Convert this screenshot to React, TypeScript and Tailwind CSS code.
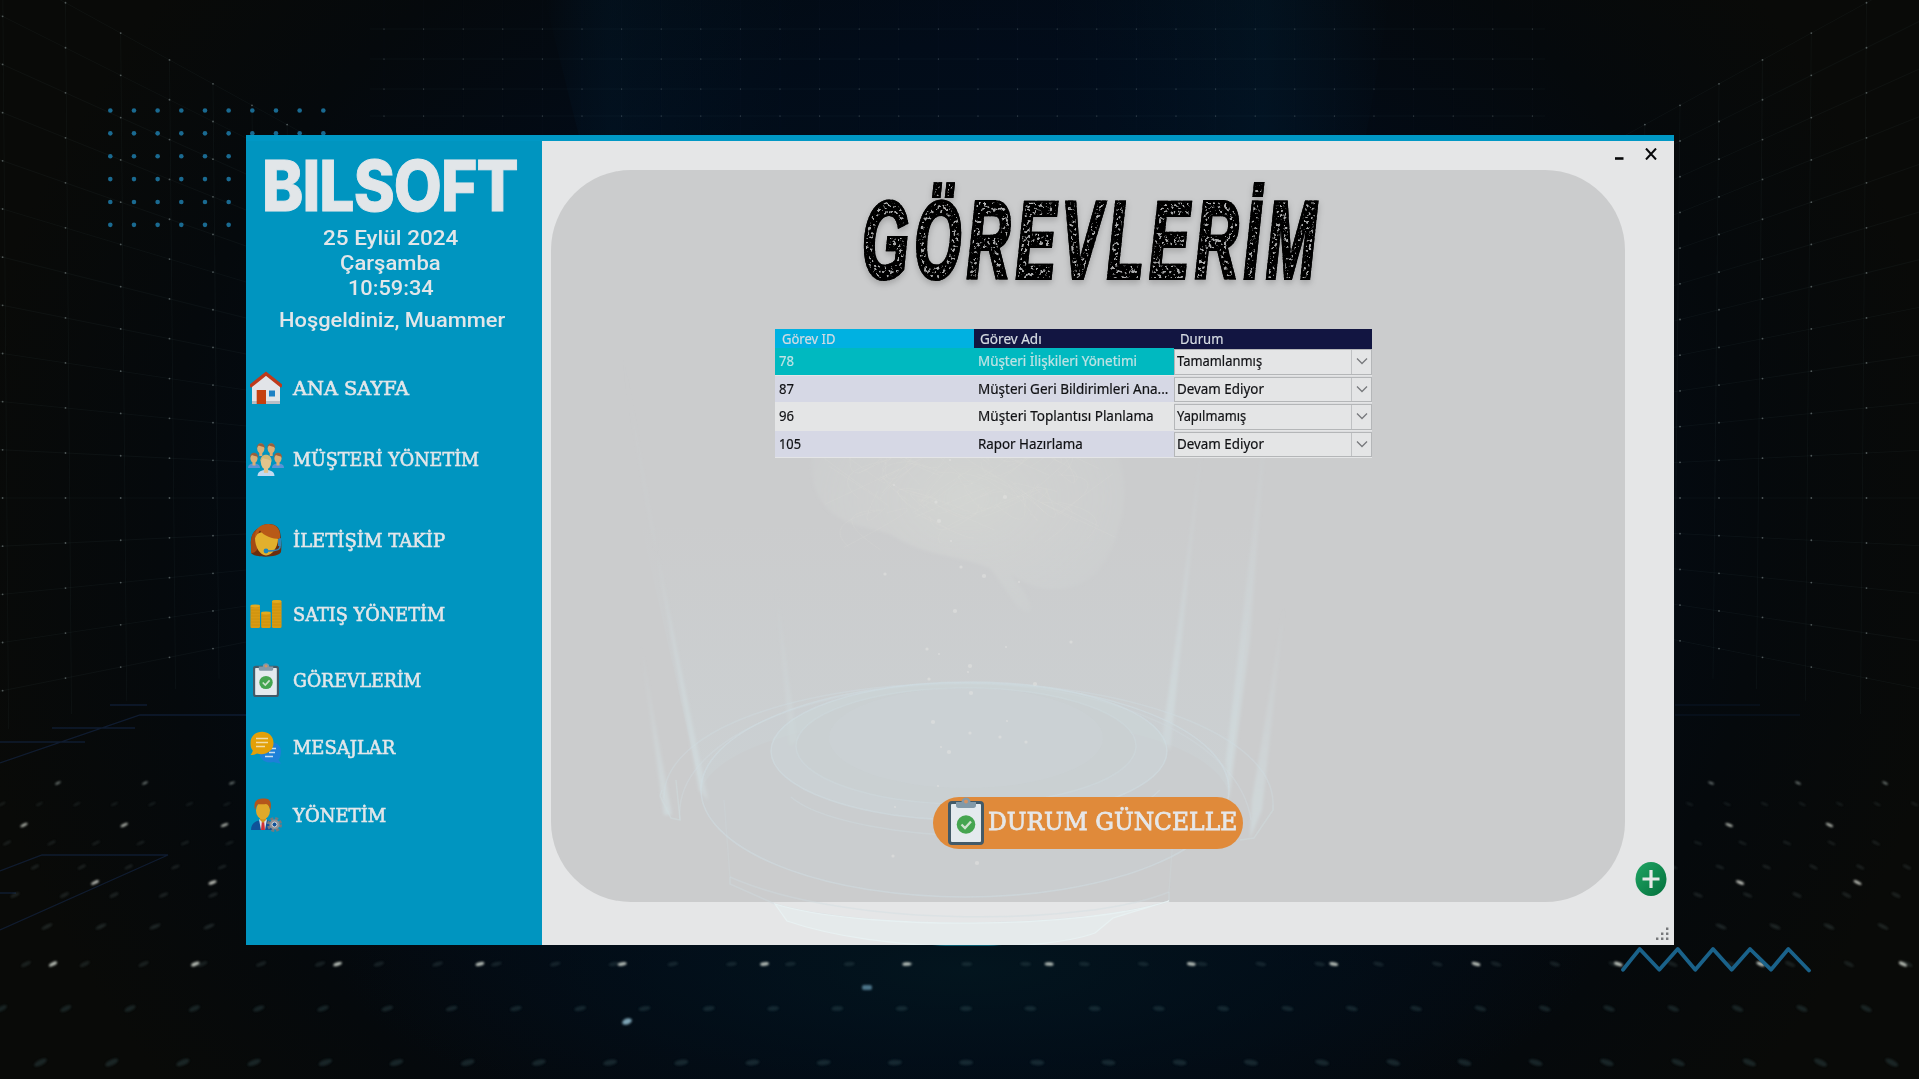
import { useLayoutEffect, useRef, useState } from "react";
import type { ReactNode } from "react";

/* Text line squeezed or stretched to a fixed width. */
function Fit({ w, className = "", children }: { w: number; className?: string; children: ReactNode }) {
  const ref = useRef<HTMLSpanElement>(null);
  const [k, setK] = useState(1);
  useLayoutEffect(() => {
    if (ref.current && ref.current.offsetWidth) setK(w / ref.current.offsetWidth);
  }, [w]);
  return (
    <span className="block shrink-0 whitespace-nowrap" style={{ width: w }}>
      <span ref={ref} className={`inline-block origin-left align-top ${className}`} style={{ transform: `scaleX(${k})` }}>
        {children}
      </span>
    </span>
  );
}

const CX = 966;

function DotRow({ y, step, from, rx, ry, fill, o }: { y: number; step: number; from: number; rx: number; ry: number; fill: string; o: number }) {
  const xs: number[] = [];
  for (let x = from; x < 1919; x += step) xs.push(x);
  return (
    <g fill={fill} opacity={o}>
      {xs.map((x) => (
        <ellipse key={x} cx={x} cy={y} rx={rx} ry={ry} transform={`rotate(${((x - CX) / 960) * 28} ${x} ${y})`} />
      ))}
    </g>
  );
}

function Backdrop() {
  const ds: number[] = [];
  for (let k = 0; k < 12; k++) ds.push(1 / (0.001038 + 0.0000725 * k));
  const slopes: number[] = [];
  for (let j = -11; j <= 4; j++) slopes.push(j * 0.05);
  const cols: number[] = [];
  for (let x = 384; x < 1550; x += 39.6) cols.push(x);
  return (
    <svg className="absolute inset-0" width="1919" height="1079" viewBox="0 0 1919 1079">
      <defs>
        <radialGradient id="glow" gradientUnits="userSpaceOnUse" cx="960" cy="540" r="1000" gradientTransform="translate(960 540) scale(1 .9) translate(-960 -540)">
          <stop offset="0" stopColor="#021220" />
          <stop offset=".55" stopColor="#020b17" />
          <stop offset=".8" stopColor="#05090c" />
          <stop offset="1" stopColor="#090a08" />
        </radialGradient>
        <linearGradient id="shaft" x1="0" x2="1" y1="0" y2="0">
          <stop offset="0" stopColor="#02233c" stopOpacity="0" />
          <stop offset=".08" stopColor="#021c30" stopOpacity=".35" />
          <stop offset=".3" stopColor="#00101f" stopOpacity=".2" />
          <stop offset=".6" stopColor="#001024" stopOpacity=".2" />
          <stop offset=".85" stopColor="#022238" stopOpacity=".35" />
          <stop offset="1" stopColor="#02233c" stopOpacity="0" />
        </linearGradient>
        <radialGradient id="floor">
          <stop offset="0" stopColor="#03161f" stopOpacity=".9" />
          <stop offset="1" stopColor="#03101a" stopOpacity="0" />
        </radialGradient>
        <filter id="dim">
          <feGaussianBlur stdDeviation=".9" />
        </filter>
      </defs>
      <rect width="1919" height="1079" fill="url(#glow)" />
      <path d="M545 0H1390L1365 140H580Z" fill="url(#shaft)" />
      <ellipse cx="966" cy="970" rx="620" ry="170" fill="url(#floor)" />
      <g stroke="#8fa7b5" strokeOpacity=".05" fill="none">
        {[29, 59, 89, 116].map((y) => (
          <path key={y} d={`M370 ${y}H1545`} />
        ))}
        {cols.map((x) => (
          <path key={x} d={`M${x} 0V135`} strokeOpacity=".02" />
        ))}
        {[-1, 1].map((s) =>
          ds.map((d) => <path key={`${s}${d}`} d={`M${CX + s * d} ${498 - d * 0.55}L${CX + s * (d - 6)} ${498 + d * 0.24}`} />),
        )}
        {[-1, 1].map((s) => slopes.map((m) => <path key={`${s}${m}`} d={`M${CX + s * 966} ${498 + 966 * m}L${CX + s * 560} ${498 + 560 * m}`} />))}
      </g>
      <g fill="#b9c8c8" opacity=".4">
        {[-1, 1].map((s) =>
          ds.map((d) => slopes.map((m) => <circle key={`${s}${d}${m}`} cx={CX + s * d} cy={498 + d * m} r=".9" />)),
        )}
        {[29, 59, 89, 116].map((y) => cols.map((x) => <circle key={`${x}${y}`} cx={x} cy={y} r=".6" />))}
      </g>
      <g stroke="#15284a" strokeOpacity=".6" fill="none" strokeWidth="1.3">
        <path d="M0 871L42 855H168L0 930M0 893H16M0 742H85M52 728H135M0 763L140 715H246M110 705H147" />
        <path d="M1675 715H1800M1675 705H1760" strokeOpacity=".3" />
      </g>
      <g filter="url(#dim)">
        <DotRow y={783} step={87} from={58} rx={3.2} ry={1} fill="#c5d3cf" o={0.55} />
        <DotRow y={804} step={37.5} from={2} rx={4} ry={1} fill="#7f9595" o={0.16} />
        <DotRow y={825} step={100.3} from={24} rx={4} ry={1.3} fill="#dfe4da" o={0.75} />
        <DotRow y={843} step={44.5} from={7} rx={4.5} ry={1.2} fill="#7f9595" o={0.18} />
        <DotRow y={867} step={46.8} from={35} rx={4.5} ry={1.4} fill="#7f9595" o={0.18} />
        <DotRow y={882.5} step={117.5} from={95} rx={4.3} ry={1.5} fill="#e6e9e0" o={0.8} />
        <DotRow y={895} step={49.5} from={15} rx={5} ry={1.6} fill="#7f9595" o={0.18} />
        <DotRow y={926.5} step={54} from={47} rx={6} ry={1.8} fill="#7f9595" o={0.2} />
        <DotRow y={964} step={58.8} from={26} rx={5.500} ry={2} fill="#7f9a9a" o={0.16} />
        <DotRow y={964} step={142.3} from={53} rx={4.500} ry={1.8} fill="#dfe6dd" o={0.8} />
        <DotRow y={1008.5} step={64.3} from={1.5} rx={6} ry={2.4} fill="#50787c" o={0.24} />
        <DotRow y={1062.5} step={71.2} from={40.5} rx={7} ry={2.8} fill="#50787c" o={0.26} />
        <ellipse cx="627" cy="1021.5" rx="5" ry="3" fill="#7fa6b8" transform="rotate(-20 627 1021.5)" />
        <rect x="862" y="985" width="10" height="5" rx="2" fill="#5f8da5" opacity=".8" />
      </g>
      <ellipse cx="967" cy="944.500" rx="38" ry="1.600" fill="#0e7f97" opacity=".7" />
      <g fill="#1a6a91">
        {Array.from({ length: 60 }, (_, i) => (
          <circle key={i} cx={110.3 + (i % 10) * 23.67} cy={110.5 + Math.floor(i / 10) * 22.87} r="2.3" />
        ))}
      </g>
      <path
        d="M1623 969.700L1639.700 949L1659.300 969.700L1677.700 949L1695.300 969.700L1713 949L1731.700 969.700L1750 949L1771 969.700L1788.300 949L1809 970.500"
        fill="none"
        stroke="#1a628a"
        strokeWidth="3.800"
        strokeLinecap="round"
        strokeLinejoin="round"
      />
    </svg>
  );
}

/* Translucent projector and brain artwork showing through the window. */
function Hologram() {
  const sparks = [
    [894, 485], [936, 502], [939, 521], [951, 541], [885, 574], [984, 576], [1019, 582], [961, 567], [955, 611], [939, 654], [927, 649], [970, 666],
    [968, 672], [929, 679], [971, 693], [1006, 647], [1071, 642], [933, 722], [1007, 721], [1026, 742], [949, 752], [941, 747], [970, 733], [1035, 684],
    [895, 807], [893, 856], [977, 863], [905, 356], [883, 430], [935, 435], [950, 460], [831, 432], [1005, 497], [938, 786], [1000, 737],
  ];
  const strands = Array.from({ length: 90 }, (_, i) => {
    const a = i * 0.7;
    const x = 968 + Math.cos(a) * 90;
    const y = 475 + Math.sin(a * 1.3) * 38;
    return `M${x} ${y}q${Math.cos(i) * 60} ${Math.sin(i * 2) * 35} ${Math.sin(i * 3) * 60} ${Math.cos(i * 2) * 40}`;
  }).join("");
  return (
    <svg className="pointer-events-none absolute -left-[296px] -top-[6px]" width="1428" height="810" viewBox="246 135 1428 810">
      <defs>
        <linearGradient id="beam" x1="0" x2="0" y1="0" y2="1">
          <stop offset="0" stopColor="#d2dee1" stopOpacity="0" />
          <stop offset="1" stopColor="#d3e0e3" stopOpacity=".6" />
        </linearGradient>
        <linearGradient id="haze" x1="0" x2="0" y1="0" y2="1">
          <stop offset="0" stopColor="#cdd8dc" stopOpacity="0" />
          <stop offset="1" stopColor="#cdd8dc" stopOpacity=".35" />
        </linearGradient>
        <radialGradient id="brain">
          <stop offset="0" stopColor="#d4d6d3" stopOpacity=".85" />
          <stop offset="1" stopColor="#cfd1d1" stopOpacity=".5" />
        </radialGradient>
        <filter id="soft">
          <feGaussianBlur stdDeviation="1.8" />
        </filter>
      </defs>
      <path
        d="M812 470C808 430 840 398 890 390C960 376 1050 395 1095 425C1130 450 1128 500 1118 530C1108 570 1085 590 1052 589C1038 589 1024 583 1010 574C1024 590 1032 602 1030 612C1018 614 1008 590 990 568C960 556 930 556 900 540C885 528 860 530 840 518C822 508 813 490 812 470Z"
        fill="url(#brain)"
        filter="url(#soft)"
      />
      <path d={strands} stroke="#dcddd9" strokeOpacity=".25" fill="none" strokeWidth=".8" />
      <path d="M640 520L1260 520L1228 790C1190 690 740 690 701 790Z" fill="url(#haze)" />
      <g fill="url(#beam)" filter="url(#soft)">
        <path d="M618 330L650 520L708 800L699 790L672 640Z" />
        <path d="M1268 400L1250 640L1229 800L1226 760L1240 640Z" />
        <path d="M1205 420L1170 750L1162 740L1180 610Z" />
        <path d="M640 640L672 815L664 815Z" />
        <path d="M1285 600L1262 810L1250 838L1252 800Z" />
        <path d="M775 580L797 740L790 745Z" opacity=".6" />
      </g>
      <g fill="none" stroke="#d0dde1" strokeOpacity=".55" strokeWidth="1.500">
        <path d="M664 800C660 730 800 683 967 683C1130 683 1275 735 1273 805" strokeOpacity=".4" />
        <path d="M680 820C672 740 810 684 967 684C1110 684 1240 740 1251 820" strokeOpacity=".35" />
        <ellipse cx="965" cy="790" rx="264" ry="107" fill="#cad1d3" fillOpacity=".3" />
        <ellipse cx="969" cy="751" rx="198" ry="69" fill="#ccd7da" fillOpacity=".45" />
        <ellipse cx="966" cy="746" rx="170" ry="58" fill="#c9cfd1" fillOpacity=".8" strokeOpacity=".4" />
        <ellipse cx="966" cy="738" rx="137" ry="50" fill="#cbd2d5" fillOpacity=".6" stroke="none" />
        <path d="M791 797C840 840 1090 860 1160 790" strokeOpacity=".4" />
        <path d="M662 790L660 796L671 818L680 820L676 780M1273 805V810L1254 838L1240 840" strokeOpacity=".45" />
        <path d="M730 877V884L775 904C860 930 1080 930 1169 901V892" strokeOpacity=".4" />
        <path d="M730 877C850 930 1090 925 1169 892" strokeOpacity=".4" />
        <path d="M724 800L730 877M1175 810L1169 892" strokeOpacity=".25" />
      </g>
      <path d="M775 904L787 921C880 953 1040 953 1095 933L1113 918L1169 901C1080 930 860 930 775 904Z" fill="#e5eaeb" stroke="#e8f1f2" strokeWidth="1.300" />
      <g fill="#e2e2e0" opacity=".6">
        {sparks.map(([x, y], i) => (
          <circle key={i} cx={x} cy={y} r={1.1 + (i % 3) * 0.5} />
        ))}
      </g>
    </svg>
  );
}

function HomeIcon() {
  return (
    <svg viewBox="0 0 32 34" className="h-[34px] w-8">
      <path d="M2 14L16 3L30 14V33H2Z" fill="#e2e4e8" />
      <path d="M2 30H30V33H2Z" fill="#b9bec6" />
      <path d="M0 15.500L16 2.600L32 15.500" fill="none" stroke="#bf3a1b" strokeWidth="3.400" strokeLinejoin="miter" />
      <rect x="6.700" y="19" width="9.300" height="14" fill="#c5400f" />
      <rect x="19" y="19.500" width="6" height="6" fill="#1c80c4" />
    </svg>
  );
}

function Person({ x, y, s, face, hair, body }: { x: number; y: number; s: number; face: string; hair: string; body: string }) {
  return (
    <g transform={`translate(${x} ${y}) scale(${s})`}>
      <path d="M-6 14C-6 10.500 -3 9.500 0 9.500C3 9.500 6 10.500 6 14Z" fill={body} />
      <rect x="-1.500" y="6" width="3" height="5.500" fill={face} />
      <ellipse cx="0" cy="4" rx="3.600" ry="5" fill={face} />
      <path d="M-4 4C-4.500 -3 4.500 -3 4 4C3 1.500 -1 2 -2 1C-3 2 -3.500 2.500 -4 4Z" fill={hair} />
    </g>
  );
}

function TeamIcon() {
  return (
    <svg viewBox="0 0 36 34" className="h-[34px] w-9">
      <Person x={12.8} y={2.5} s={1} face="#dcae74" hair="#96603f" body="#0a8db8" />
      <Person x={23.2} y={2.5} s={1} face="#dcae74" hair="#96603f" body="#0a8db8" />
      <Person x={6} y={12} s={1} face="#dcae74" hair="#96603f" body="#5b93d6" />
      <Person x={30} y={12} s={1} face="#dcae74" hair="#96603f" body="#5b93d6" />
      <Person x={18} y={14.5} s={1.42} face="#e2c48c" hair="#d2b877" body="#c3daf0" />
    </svg>
  );
}

function SupportIcon() {
  return (
    <svg viewBox="0 0 32 36" className="h-9 w-8">
      <path d="M1 24C0 14 4 8 9 6C14 0 28 0 30 10C31 15 32 24 31 30C29 36 4 36 1 31Z" fill="#6b2d0e" />
      <path d="M1 24C0 12 5 8 9 6L8 26C6 30 4 31 1 31Z" fill="#a34a14" />
      <path d="M5 16C6 8 24 8 28 17C28 25 22 33.500 16 33.500C10 33.500 5 25 5 16Z" fill="#e2b02d" />
      <path d="M8 6C14 0 29 0 30 12V17C22 17 14 14 10 8.500C8 11 6.500 13 5 16C5 11 6 8 8 6Z" fill="#b85a17" />
      <path d="M30 16V25C30 28 24 29 17 29" fill="none" stroke="#3583b5" strokeWidth="1.600" />
      <path d="M29.500 17V24" stroke="#3583b5" strokeWidth="3" />
      <circle cx="16" cy="29" r="2.400" fill="#1b87c0" />
    </svg>
  );
}

function CoinsIcon() {
  const stack = (x: number, top: number) => (
    <g key={x}>
      <rect x={x} y={top} width="9.500" height={29 - top} rx="1.500" fill="#d99a12" />
      {Array.from({ length: Math.floor((27 - top) / 3) }, (_, i) => (
        <path key={i} d={`M${x} ${26 - i * 3}h9.500`} stroke="#c98f10" strokeWidth=".8" />
      ))}
      <ellipse cx={x + 4.75} cy={top + 1} rx="4.750" ry="1.400" fill="#e3aa1e" />
    </g>
  );
  return (
    <svg viewBox="0 0 32 30" className="h-[30px] w-8">
      {stack(0.5, 6)}
      {stack(11.2, 13)}
      {stack(22, 1.5)}
    </svg>
  );
}

function ClipboardIcon({ className }: { className: string }) {
  return (
    <svg viewBox="0 0 36 48" preserveAspectRatio="none" className={className}>
      <rect x="1.500" y="5.500" width="33" height="41" rx="2.500" fill="#e4eaee" stroke="#435a68" strokeWidth="3" />
      <path d="M8 5H13.500C13.500 -1 22.500 -1 22.500 5H28V8.500C28 10 27 11 25.500 11H10.500C9 11 8 10 8 8.500Z" fill="#8299a8" />
      <circle cx="18" cy="4.500" r="1.900" fill="#d59262" />
      <circle cx="18" cy="27.500" r="9.300" fill="#45a550" />
      <path d="M13.500 27.500L17 31L23 24.500" fill="none" stroke="#cfe3cf" strokeWidth="2.300" />
    </svg>
  );
}

function ChatIcon() {
  return (
    <svg viewBox="0 0 32 33" className="h-[33px] w-8">
      <path d="M31 20C31 26 29 28 28.500 29L31 32.500C27 32 25 31.500 24 31C14 33 9 27 9 20C9 8 31 8 31 20Z" fill="#1d80d8" />
      <path d="M19 17.500H26M19 21.500H25M15 25.500H23" stroke="#c9def0" strokeWidth="1.400" />
      <path d="M.5 12C.5 -3 23.500 -3 23.500 12C23.500 21 14 25 7 22.500C5 23.500 3 24 .5 24C2 22 2.500 21 2.800 19.500C1 17.500 .5 15 .5 12Z" fill="#e3a008" />
      <path d="M6 7.500H18M6 11.500H18M6 15.500H15" stroke="#f0dca8" strokeWidth="1.500" />
    </svg>
  );
}

function ManagerIcon() {
  return (
    <svg viewBox="0 0 32 34" className="h-[34px] w-8">
      <path d="M1 32C1 24 8 22 13 22C20 22 25 24 25 32Z" fill="#0f5299" />
      <path d="M9 21.500H17L15 32H11Z" fill="#dfe4ea" />
      <path d="M11.800 24H14.200L15 32H11Z" fill="#cf3238" />
      <path d="M10 17H16V22L13 25L10 22Z" fill="#cf9420" />
      <ellipse cx="13" cy="12.500" rx="7" ry="9" fill="#e0a92a" />
      <path d="M5 12C3 3 7 0 14 .5C20 0 22 4 20.500 12C19 8 18 6 16 6C12 7 9 5.500 7.500 6.500C6 8 6 10 5 12Z" fill="#b4551b" />
      <circle cx="24.500" cy="26.500" r="6" fill="none" stroke="#75797f" strokeWidth="3" strokeDasharray="2.800 1.912" />
      <circle cx="24.500" cy="26.500" r="3.800" fill="#0f5299" stroke="#8d9196" strokeWidth="2.600" />
      <circle cx="24.500" cy="26.500" r="2.500" fill="none" stroke="#d6dade" strokeWidth="1" />
    </svg>
  );
}

const nav = [
  { label: "ANA SAYFA", w: 116, icon: <HomeIcon />, box: "h-[66px]" },
  { label: "MÜŞTERİ YÖNETİM", w: 186, icon: <TeamIcon />, box: "h-[76px]" },
  { label: "İLETİŞİM TAKİP", w: 152, icon: <SupportIcon />, box: "h-[86px]" },
  { label: "SATIŞ YÖNETİM", w: 152, icon: <CoinsIcon />, box: "h-[62px]" },
  { label: "GÖREVLERİM", w: 128, icon: <ClipboardIcon className="h-[34px] w-[26px]" />, box: "h-[70px]" },
  { label: "MESAJLAR", w: 102, icon: <ChatIcon />, box: "h-[64px]" },
  { label: "YÖNETİM", w: 93, icon: <ManagerIcon />, box: "h-[72px]" },
];

function Sidebar() {
  return (
    <aside className="flex w-[296px] shrink-0 flex-col bg-[#0095c0] text-[#e2e6e9]">
      <div className="flex h-[70px] items-end pl-[16px]">
        <Fit w={256} className="h-[51px] font-['Inter'] text-[70px] leading-[51px] font-extrabold tracking-[-1px] [-webkit-text-stroke:1px_#e2e6e9]">BILSOFT</Fit>
      </div>
      <div className="mt-[15px] flex flex-col items-center pr-2 font-['Roboto'] text-[20.5px] leading-[25px] font-medium">
        <Fit w={135}>25 Eylül 2024</Fit>
        <Fit w={101}>Çarşamba</Fit>
        <div className="pl-0.5">
          <Fit w={86}>10:59:34</Fit>
        </div>
      </div>
      <div className="mt-[7px] flex justify-center pr-1 font-['Roboto'] text-[20.5px] leading-[25px]">
        <Fit w={226} className="font-medium">Hoşgeldiniz, Muammer</Fit>
      </div>
      <nav className="mt-[22px] flex flex-col font-['DejaVu_Serif',serif] text-[19px] leading-6">
        {nav.map((n) => (
          <a key={n.label} className={`flex items-center gap-[9px] pl-0.5 ${n.box}`}>
            <span className="flex w-9 shrink-0 justify-center">{n.icon}</span>
            <Fit w={n.w} className="[-webkit-text-stroke:0.6px_#e2e6e9]">{n.label}</Fit>
          </a>
        ))}
      </nav>
    </aside>
  );
}

const rows = [
  { id: "78", idW: 15, name: "Müşteri İlişkileri Yönetimi", w: 159, state: "Tamamlanmış", sw: 85, tone: "bg-[#00b9c0] text-[#bfe3e4]" },
  { id: "87", idW: 15, name: "Müşteri Geri Bildirimleri Ana...", w: 190, state: "Devam Ediyor", sw: 87, tone: "bg-[#d6d8e5] text-[#101114]" },
  { id: "96", idW: 15, name: "Müşteri Toplantısı Planlama", w: 176, state: "Yapılmamış", sw: 69, tone: "bg-[#e4e5e6] text-[#101114]" },
  { id: "105", idW: 22, name: "Rapor Hazırlama", w: 105, state: "Devam Ediyor", sw: 87, tone: "bg-[#d6d8e5] text-[#101114]" },
];

function TaskTable() {
  return (
    <div className="relative w-[597px] font-['Noto_Sans',sans-serif] text-[14px] leading-[18px] [-webkit-text-stroke:0.2px_currentColor]">
      <div className="grid h-[19px] grid-cols-[199px_200px_198px] leading-[20px] text-[#d5dbe2]">
        <div className="bg-[#00b1e1] pl-[7px]"><Fit w={54}>Görev ID</Fit></div>
        <div className="bg-[#121541] pl-[6px]"><Fit w={62}>Görev Adı</Fit></div>
        <div className="bg-[#121541] pl-[6px]"><Fit w={43}>Durum</Fit></div>
      </div>
      {rows.map((r) => (
        <div key={r.id} className="grid h-[27.5px] grid-cols-[399px_198px] border-b border-[#e4e5e6] bg-[#dcdddf]">
          <div className={`grid grid-cols-[199px_200px] items-center ${r.tone}`}>
            <div className="pl-[4px]"><Fit w={r.idW}>{r.id}</Fit></div>
            <div className="pl-[4px]"><Fit w={r.w}>{r.name}</Fit></div>
          </div>
          <div className="mt-px flex items-stretch border border-[#b4b6b8] bg-[#e4e5e6] text-[#101114]">
            <div className="flex flex-1 items-center pb-px pl-[2px]"><Fit w={r.sw}>{r.state}</Fit></div>
            <div className="flex w-[20px] items-center justify-center border-l border-[#bfc1c3] pb-px">
              <svg viewBox="0 0 12 8" className="h-2 w-3">
                <path d="M1 1.500L6 6.500L11 1.500" fill="none" stroke="#77797c" strokeWidth="1.300" />
              </svg>
            </div>
          </div>
        </div>
      ))}
    </div>
  );
}

function Title() {
  return (
    <h1 className="relative pl-[6px]">
      <svg className="absolute h-0 w-0">
        <filter id="worn" x="-5%" y="-5%" width="110%" height="115%">
          <feTurbulence type="fractalNoise" baseFrequency=".32" numOctaves="3" seed="8" result="t" />
          <feColorMatrix in="t" values="0 0 0 0 0  0 0 0 0 0  0 0 0 0 0  9 0 0 0 -5" result="n" />
          <feComposite in="SourceGraphic" in2="n" operator="out" result="worn" />
          <feMorphology in="SourceAlpha" operator="erode" radius="1.500" result="inner" />
          <feComposite in="SourceGraphic" in2="inner" operator="out" result="edge" />
          <feMerge>
            <feMergeNode in="edge" />
            <feMergeNode in="worn" />
          </feMerge>
        </filter>
      </svg>
      <div className="[filter:url(#worn)_drop-shadow(0_3px_3px_rgba(0,0,0,0.22))]">
        <Fit
          w={460}
          className="font-['Liberation_Sans'] text-[110px] leading-[120px] font-bold tracking-[10px] text-black italic [-webkit-text-stroke:4px_#000]"
        >
          GÖREVLERİM
        </Fit>
      </div>
    </h1>
  );
}

export default function App() {
  return (
    <div className="relative h-[1079px] w-[1919px] overflow-hidden bg-[#04080e] pt-[135px] pl-[246px]">
      <Backdrop />
      <section className="relative flex h-[810px] w-[1428px] flex-col overflow-hidden bg-[#e5e6e7]">
        <div className="h-[6px] shrink-0 bg-[#0098c5]" />
        <div className="flex min-h-0 flex-1">
          <Sidebar />
          <main className="relative flex flex-1 pt-[29px] pl-[9px]">
            <div className="h-[732px] w-[1074px] shrink-0 rounded-[80px] bg-[#cbcccd]" />
            <Hologram />
            <div className="absolute inset-x-0 top-[29px] bottom-0 flex">
              <div className="ml-[10px] flex w-[1073px] flex-col items-center">
                <div className="flex h-[159px] w-full justify-center pt-[10px]">
                  <Title />
                </div>
                <div className="mr-[30px]">
                  <TaskTable />
                </div>
                <button className="mt-[339px] mr-[2px] flex h-[52px] w-[310px] items-start gap-[4px] rounded-full bg-[#e08a3a] pl-[15px] text-[#e6e7e8]">
                  <ClipboardIcon className="h-[48px] w-[36px] shrink-0" />
                  <Fit w={249} className="pt-[9px] font-['DejaVu_Serif',serif] text-[25px] leading-[32px] [-webkit-text-stroke:0.8px_#e6e7e8]">DURUM GÜNCELLE</Fit>
                </button>
              </div>
              <div className="-mt-[29px] flex flex-1 flex-col">
                <div className="flex h-7 pt-[7px]">
                  <svg viewBox="0 0 42 12" className="-ml-[10px] h-3 w-[42px]" fill="none" stroke="#08090b">
                    <path d="M0 10.500H8.500" strokeWidth="2.600" />
                    <path d="M31 .5L41 11.500M41 .5L31 11.500" strokeWidth="2" />
                  </svg>
                </div>
                <svg viewBox="0 0 32 34" className="mt-[693px] ml-[10px] h-[34px] w-8">
                  <defs>
                    <linearGradient id="plus" x1="0" x2="1" y1="0" y2="1">
                      <stop offset="0" stopColor="#1fa564" />
                      <stop offset="1" stopColor="#04703c" />
                    </linearGradient>
                  </defs>
                  <ellipse cx="16" cy="17" rx="15.500" ry="17" fill="url(#plus)" />
                  <path d="M16 8V26M7.500 17H24.500" stroke="#e6e8e7" strokeWidth="3.200" />
                </svg>
                <svg viewBox="0 0 14 14" className="mt-[31px] ml-[30px] h-[14px] w-[14px]" fill="#77787b">
                  <path d="M11 .5h2.400v2.400h-2.400zM6 5.500h2.400v2.400h-2.400zM11 5.500h2.400v2.400h-2.400zM1 10.500h2.400v2.400h-2.400zM6 10.500h2.400v2.400h-2.400zM11 10.500h2.400v2.400h-2.400z" />
                </svg>
              </div>
            </div>
          </main>
        </div>
      </section>
    </div>
  );
}
